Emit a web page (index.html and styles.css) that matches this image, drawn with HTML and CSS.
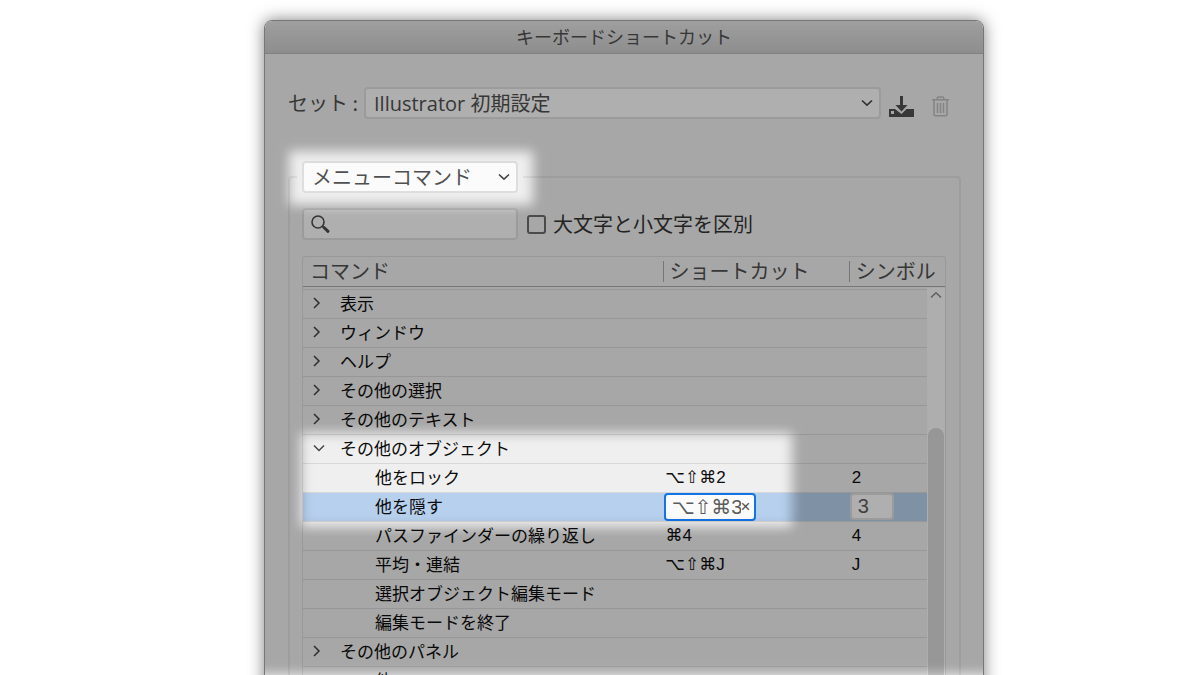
FILE: index.html
```html
<!DOCTYPE html>
<html lang="ja">
<head>
<meta charset="utf-8">
<title>キーボードショートカット</title>
<link rel="stylesheet" href="styles.css">
</head>
<body>
<main class="window">
  <h1 class="titlebar">キーボードショートカット</h1>
  <div class="content">
    <div class="set-row">
      <label class="set-label" for="set">セット :</label>
      <div class="select-wrap set-select">
        <select id="set" class="field"><option>Illustrator 初期設定</option></select>
        <svg class="chevron" viewBox="0 0 12 8" aria-hidden="true"><path d="M1 1.5l5 4.7 5-4.7"/></svg>
      </div>
      <button class="icon-button save" aria-label="保存">
        <svg viewBox="0 0 25 21" width="25" height="21"><path fill="#505050" fill-rule="evenodd" d="M11 0h3v9h4.500l-6 6.500-6-6.500H11zM0 13h6l6.500 5 5-5H25v8H0zM2 15v3h3v-3z"/></svg>
      </button>
      <button class="icon-button trash" aria-label="削除">
        <svg viewBox="0 0 17 21" width="17" height="21" fill="none" stroke="#bdbdbd" stroke-width="1.500"><path d="M0 3.700h17M5.200 3.700V2.200q0-1.200 1.300-1.200h4q1.300 0 1.300 1.200v1.500M2 4v14.500q0 1.200 1.200 1.200h10.600q1.200 0 1.200-1.200V4M5.500 7v10M8.500 7v10M11.500 7v10"/></svg>
      </button>
    </div>

    <fieldset class="group">
      <legend class="legend">
        <span class="select-wrap kind-select">
          <select class="field" aria-label="種類"><option>メニューコマンド</option></select>
          <svg class="chevron" viewBox="0 0 12 8" aria-hidden="true"><path d="M1 1.500l5 4.700 5-4.700"/></svg>
        </span>
      </legend>
      <div class="search-row">
        <div class="search">
          <input class="field" type="text" aria-label="検索">
          <svg class="lens" viewBox="0 0 19 18" aria-hidden="true" fill="none" stroke="#4c4c4c"><circle cx="7" cy="7" r="6" stroke-width="1.600"/><path d="M11.200 11.200l2 1.600" stroke-width="1.600"/><path d="M13 12.500l4 3.800" stroke-width="3" stroke-linecap="round"/></svg>
        </div>
        <label class="case"><input type="checkbox" class="check">大文字と小文字を区別</label>
      </div>

      <div class="list">
        <table class="commands">
          <colgroup><col class="col-name"><col class="col-keys"><col class="col-symbol"></colgroup>
          <thead><tr><th scope="col">コマンド</th><th scope="col">ショートカット</th><th scope="col">シンボル</th></tr></thead>
          <tbody>
            <tr><td><span class="parent"><svg class="twist" viewBox="0 0 12 12"><path d="M1 1l5 5-5 5"/></svg>表示</span></td><td></td><td></td></tr>
            <tr><td><span class="parent"><svg class="twist" viewBox="0 0 12 12"><path d="M1 1l5 5-5 5"/></svg>ウィンドウ</span></td><td></td><td></td></tr>
            <tr><td><span class="parent"><svg class="twist" viewBox="0 0 12 12"><path d="M1 1l5 5-5 5"/></svg>ヘルプ</span></td><td></td><td></td></tr>
            <tr><td><span class="parent"><svg class="twist" viewBox="0 0 12 12"><path d="M1 1l5 5-5 5"/></svg>その他の選択</span></td><td></td><td></td></tr>
            <tr><td><span class="parent"><svg class="twist" viewBox="0 0 12 12"><path d="M1 1l5 5-5 5"/></svg>その他のテキスト</span></td><td></td><td></td></tr>
            <tr><td><span class="parent"><svg class="twist" viewBox="0 0 12 12"><path d="M1 3.500l5 5 5-5"/></svg>その他のオブジェクト</span></td><td></td><td></td></tr>
            <tr><td><span class="child">他をロック</span></td><td><span class="keys">⌥⇧⌘2</span></td><td><span class="keys">2</span></td></tr>
            <tr class="selected"><td><span class="child">他を隠す</span></td>
              <td><div class="key-edit"><input class="key-input" type="text" value="⌥⇧⌘3" aria-label="ショートカット"><button class="clear" aria-label="消去">×</button></div></td>
              <td><input class="symbol-input" type="text" value="3" aria-label="シンボル"></td></tr>
            <tr><td><span class="child">パスファインダーの繰り返し</span></td><td><span class="keys">⌘4</span></td><td><span class="keys">4</span></td></tr>
            <tr><td><span class="child">平均・連結</span></td><td><span class="keys">⌥⇧⌘J</span></td><td><span class="keys">J</span></td></tr>
            <tr><td><span class="child">選択オブジェクト編集モード</span></td><td></td><td></td></tr>
            <tr><td><span class="child">編集モードを終了</span></td><td></td><td></td></tr>
            <tr><td><span class="parent"><svg class="twist" viewBox="0 0 12 12"><path d="M1 1l5 5-5 5"/></svg>その他のパネル</span></td><td></td><td></td></tr>
            <tr><td><span class="child">他</span></td><td></td><td></td></tr>
          </tbody>
        </table>
        <div class="scrollbar">
          <svg class="up" viewBox="0 0 12 8" aria-hidden="true"><path d="M1 6.500l5-4.700 5 4.700"/></svg>
          <div class="thumb"></div>
        </div>
      </div>
    </fieldset>
  </div>

  <svg class="dim" aria-hidden="true">
    <defs>
      <filter id="soft" filterUnits="userSpaceOnUse" x="-60" y="-60" width="2000" height="1000"><feGaussianBlur stdDeviation="6"/></filter>
      <mask id="spots" maskUnits="userSpaceOnUse" x="0" y="0" width="100%" height="100%">
        <rect width="100%" height="100%" fill="#fff"/>
        <g filter="url(#soft)">
          <rect x="24" y="130" width="244" height="54"/>
          <rect x="36" y="412" width="491" height="94"/>
          <rect x="-50" y="653" width="1900" height="200"/>
        </g>
      </mask>
    </defs>
    <rect width="100%" height="100%" fill="#000" fill-opacity=".3" mask="url(#spots)"/>
  </svg>
</main>
</body>
</html>
```

FILE: styles.css
```css
* { box-sizing: border-box; }

body {
  margin: 0;
  padding-top: 20px;
  height: 100vh;
  overflow: hidden;
  background: #fff;
  color: #505050;
  font: 20px/30px "Noto Sans CJK JP", sans-serif;
}

.window {
  position: relative;
  width: 60%;
  margin-left: 22%;
  background: #efefef;
  border: 1px solid #777;
  border-radius: 8px 8px 0 0;
  box-shadow: 0 0 16px rgba(0, 0, 0, .5);
  overflow: hidden;
}

.titlebar {
  margin: 0;
  height: 33px;
  background: linear-gradient(#e4e4e4, #cbcbcb);
  border-bottom: 1px solid #b8b8b8;
  font-size: 18px;
  font-weight: 400;
  line-height: 30px;
  text-align: center;
}

.content { padding: 33px 22px 0 23px; }

.set-row {
  display: flex;
  align-items: center;
  padding-right: 12px;
  margin-bottom: 42px;
}
.set-label { width: 76px; white-space: nowrap; }
.set-select { flex: 1; }

.select-wrap { position: relative; display: block; }
.field {
  appearance: none;
  display: block;
  width: 100%;
  height: 32px;
  margin: 0;
  padding: 1px 8px 0;
  border: 2px solid #dedede;
  border-radius: 4px;
  background: #fbfbfb;
  color: #505050;
  font: 20px/28px "Open Sans", "Noto Sans CJK JP", sans-serif;
}
.chevron {
  position: absolute;
  right: 8px;
  top: 12px;
  width: 12px;
  height: 8px;
  fill: none;
  stroke: #444;
  stroke-width: 1.6px;
  pointer-events: none;
}

.icon-button {
  display: block;
  padding: 0;
  border: 0;
  background: none;
  line-height: 0;
}
.save { margin: 6px 0 0 8px; }
.trash { margin: 6px 0 0 18px; }

.group {
  min-width: 0;
  margin: 0;
  padding: 15px 13px 0 12px;
  border: 2px solid #e1e1e1;
  border-bottom: 0;
  border-radius: 4px 4px 0 0;
}
.legend { margin-left: -5px; padding: 0 5px; }
.kind-select { width: 216px; }

.search-row { display: flex; align-items: center; gap: 9px; margin-bottom: 16px; }
.search { position: relative; width: 216px; }
.search .field { padding-left: 36px; }
.lens { position: absolute; left: 9px; top: 7px; width: 19px; height: 18px; }
.case { display: flex; align-items: center; gap: 7px; color: #333; white-space: nowrap; }
.check {
  appearance: none;
  width: 19px;
  height: 19px;
  margin: 0;
  border: 2px solid #6c6c6c;
  border-radius: 3px;
}

.list {
  position: relative;
  border: 1px solid #dadada;
  border-bottom: 0;
  border-radius: 4px 4px 0 0;
}
.commands {
  width: 100%;
  table-layout: fixed;
  border-collapse: separate;
  border-spacing: 0;
}
.col-name { width: 56%; }
.col-keys { width: 29%; }
.commands th {
  height: 33px;
  padding: 0 0 4px 7px;
  border-bottom: 1px solid #d8d8d8;
  background:
    linear-gradient(#aaa, #aaa) 0 4px / 1px 21px no-repeat,
    linear-gradient(#aaa, #aaa) 0 29px / 100% 1px no-repeat;
  font-weight: 400;
  line-height: 28px;
  text-align: left;
  white-space: nowrap;
}
.commands th:first-child {
  background: linear-gradient(#aaa, #aaa) 0 29px / 100% 1px no-repeat;
}
.commands td {
  height: 29px;
  padding: 0;
  border-bottom: 1px solid #d8d8d8;
  color: #0c0c0c;
  font-size: 17px;
  line-height: 26px;
  vertical-align: top;
  white-space: nowrap;
}
.parent { display: flex; align-items: center; gap: 15px; padding-left: 10px; }
.twist { width: 12px; height: 12px; fill: none; stroke: #444; stroke-width: 1.5px; }
.child { display: block; padding-left: 72px; }
.keys { display: block; padding-left: 3px; font-family: "Liberation Sans", "DejaVu Sans", sans-serif; line-height: 28px; }
.selected td { background: #b7d0ed; }

.key-edit {
  display: flex;
  align-items: center;
  width: 92px;
  height: 28px;
  margin-left: 1px;
  padding-right: 3px;
  border: 2px solid #1473e6;
  border-radius: 4px;
  background: #fbfbfb;
}
.key-input {
  flex: 1;
  min-width: 0;
  padding: 0 0 0 6px;
  border: 0;
  background: none;
  color: #5c5c5c;
  font: 20px/24px "Liberation Sans", "DejaVu Sans", sans-serif;
}
.clear {
  padding: 0;
  border: 0;
  background: none;
  color: #505050;
  font: 17px/20px "Liberation Sans", sans-serif;
}
.symbol-input {
  display: block;
  width: 44px;
  height: 27px;
  margin-left: 1px;
  padding: 0 6px;
  border: 2px solid #dedede;
  border-radius: 4px;
  background: #fbfbfb;
  color: #5c5c5c;
  font: 20px/23px "Liberation Sans", sans-serif;
}

.scrollbar {
  position: absolute;
  top: 31px;
  right: 0;
  bottom: 0;
  width: 18px;
  padding: 3px 1px 0;
  background: #fafafa;
}
.up { display: block; width: 12px; height: 8px; margin: 0 auto 129px; fill: none; stroke: #888; stroke-width: 1.5px; }
.thumb { height: 400px; border-radius: 8px; background: #d9d9d9; }

.dim {
  position: absolute;
  top: 0;
  left: 0;
  width: 100%;
  height: 100%;
  pointer-events: none;
}
```
